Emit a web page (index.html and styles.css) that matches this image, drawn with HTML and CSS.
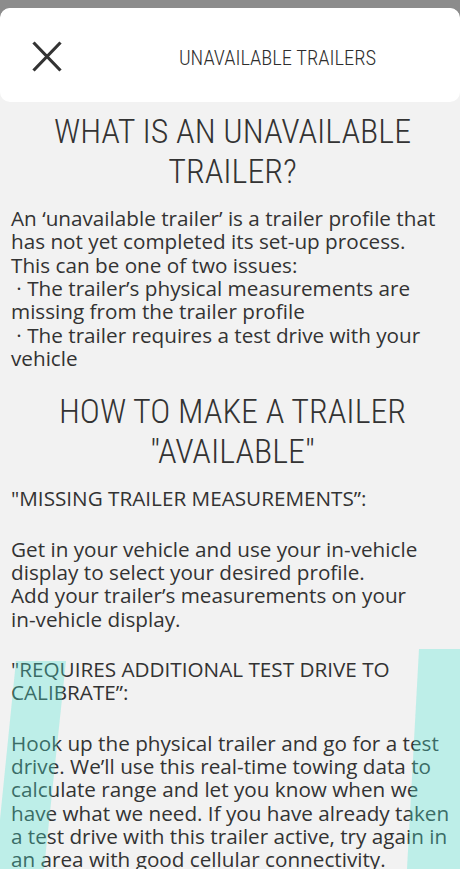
FILE: index.html
```html
<!DOCTYPE html>
<html lang="en">
<head>
<meta charset="utf-8">
<title>Unavailable Trailers</title>
<link rel="stylesheet" href="styles.css">
</head>
<body>
<div class="sheet">
  <header class="topbar">
    <button class="close" aria-label="Close">
      <svg width="30" height="31" viewBox="0 0 30 31" aria-hidden="true">
        <path d="M1.5 1.5 L28.5 29.5 M28.5 1.5 L1.5 29.5" stroke="#333" stroke-width="3.2" fill="none"/>
      </svg>
    </button>
    <div class="title">UNAVAILABLE TRAILERS</div>
  </header>

  <main class="content">
    <section class="block">
      <h1 class="heading">WHAT IS AN UNAVAILABLE TRAILER?</h1>
      <p class="text">An ‘unavailable trailer’ is a trailer profile that has not yet completed its set-up process.<br>This can be one of two issues:<br>&nbsp;· The trailer’s physical measurements are missing from the trailer profile<br>&nbsp;· The trailer requires a test drive with your vehicle</p>
    </section>

    <section class="block">
      <h2 class="heading heading-second">HOW TO MAKE A TRAILER "AVAILABLE"</h2>
      <p class="text">"MISSING TRAILER MEASUREMENTS”:</p>
      <p class="text spaced">Get in your vehicle and use your <span class="nowrap">in-vehicle</span> display to select your desired profile.<br>Add your trailer’s measurements on your <span class="nowrap">in-vehicle</span> display.</p>
      <p class="text spaced">"REQUIRES ADDITIONAL TEST DRIVE TO CALIBRATE”:</p>
      <p class="text spaced">Hook up the physical trailer and go for a test drive. We’ll use this <span class="nowrap">real-time</span> towing data to calculate range and let you know when we have what we need. If you have already taken a test drive with this trailer active, try again in an area with good cellular connectivity.</p>
    </section>
  </main>

  <svg class="swoosh" width="460" height="869" viewBox="0 0 460 869" aria-hidden="true">
    <polygon points="16,661 66,661 44,869 -5,869" />
    <polygon points="419,649 460,649 460,869 407,869" />
  </svg>
</div>
</body>
</html>
```
FILE: styles.css
```css
html, body {
  margin: 0;
  padding: 0;
}

body {
  background: #8c8c8c;
  font-family: "Open Sans", "Noto Sans", sans-serif;
  color: #333333;
}

.sheet {
  position: relative;
  margin-top: 8px;
  background: #f2f2f2;
  border-radius: 10px 10px 0 0;
  min-height: 861px;
  overflow: hidden;
}

.topbar {
  display: flex;
  align-items: center;
  height: 94px;
  background: #ffffff;
  border-radius: 10px;
}

.close {
  display: flex;
  align-items: center;
  width: 95px;
  height: 100%;
  padding: 2px 0 0 32px;
  margin: 0;
  border: 0;
  background: transparent;
  box-sizing: border-box;
}

.title {
  flex: 1;
  text-align: center;
  padding-top: 6px;
  font-family: "Roboto Condensed", "Roboto", sans-serif;
  font-weight: 300;
  font-size: 20.5px;
  color: #2e2e2e;
}

.content {
  padding: 0 6px 40px 11px;
}

.heading {
  margin: 9px 0 16px;
  text-align: center;
  font-family: "Roboto Condensed", "Roboto", sans-serif;
  font-weight: 300;
  font-size: 34px;
  line-height: 40px;
  color: #333333;
}

.heading-second {
  margin-top: 21px;
}

.text {
  margin: 0;
  font-size: 20.7px;
  line-height: 23.33px;
}

.text.spaced {
  margin-top: 27px;
}

.nowrap {
  white-space: nowrap;
}

.swoosh {
  position: absolute;
  top: -8px;
  left: 0;
  pointer-events: none;
}

.swoosh polygon {
  fill: rgb(79, 230, 212);
  fill-opacity: 0.32;
}
```
